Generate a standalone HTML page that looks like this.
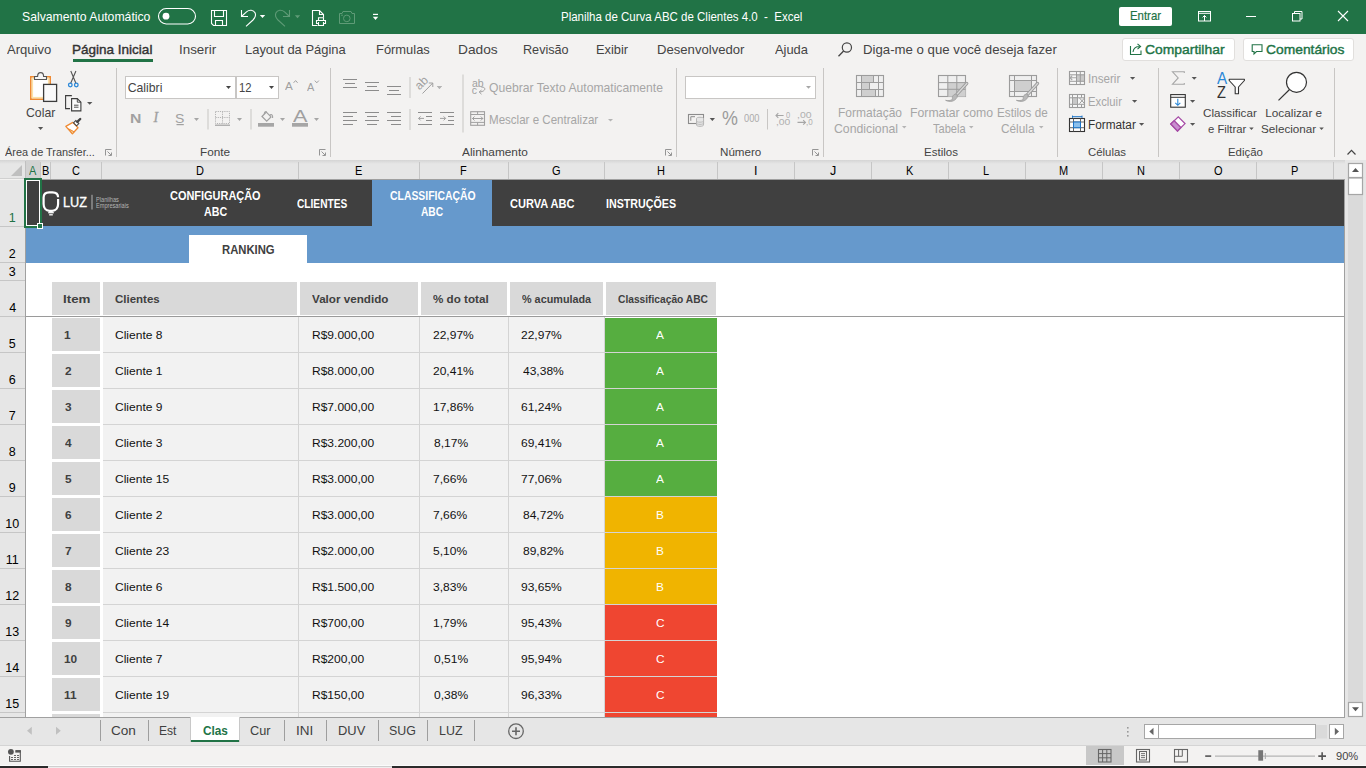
<!DOCTYPE html>
<html><head><meta charset="utf-8">
<style>
*{margin:0;padding:0;box-sizing:border-box}
html,body{width:1366px;height:768px;overflow:hidden;background:#f3f2f1;font-family:"Liberation Sans",sans-serif}
.a{position:absolute}
.t{position:absolute;white-space:nowrap;line-height:1;transform-origin:0 0;font-family:"Liberation Sans",sans-serif}
svg{position:absolute;overflow:visible}
</style></head><body>
<!-- title bar -->
<div class="a" style="left:0;top:0;width:1366px;height:34px;background:#217346"></div>
<!-- menu + ribbon -->
<div class="a" style="left:0;top:34px;width:1366px;height:126px;background:#f3f2f1"></div>
<div class="a" style="left:73px;top:59px;width:80px;height:3px;background:#217346"></div>
<div class="a" style="left:1119px;top:7px;width:53px;height:19px;background:#fff;border-radius:2px"></div>
<div class="a" style="left:1122px;top:38px;width:113px;height:23px;background:#fff;border:1px solid #e1dfdd;border-radius:3px"></div>
<div class="a" style="left:1243px;top:38px;width:111px;height:23px;background:#fff;border:1px solid #e1dfdd;border-radius:3px"></div>
<!-- ribbon separators -->
<div class="a" style="left:116px;top:68px;width:1px;height:89px;background:#c8c6c4"></div>
<div class="a" style="left:330px;top:68px;width:1px;height:89px;background:#c8c6c4"></div>
<div class="a" style="left:676px;top:68px;width:1px;height:89px;background:#c8c6c4"></div>
<div class="a" style="left:823px;top:68px;width:1px;height:89px;background:#c8c6c4"></div>
<div class="a" style="left:1057px;top:68px;width:1px;height:89px;background:#c8c6c4"></div>
<div class="a" style="left:1158px;top:68px;width:1px;height:89px;background:#c8c6c4"></div>
<div class="a" style="left:1334px;top:68px;width:1px;height:89px;background:#c8c6c4"></div>
<!-- font boxes -->
<div class="a" style="left:125px;top:76px;width:111px;height:23px;background:#fff;border:1px solid #c8c6c4"></div>
<div class="a" style="left:236px;top:76px;width:43px;height:23px;background:#fff;border:1px solid #c8c6c4"></div>
<div class="a" style="left:685px;top:76px;width:131px;height:23px;background:#fff;border:1px solid #c8c6c4"></div>
<!-- ribbon bottom shadow -->

<!-- column header bar -->
<div class="a" style="left:0;top:160px;width:1366px;height:19px;background:#e6e6e6"></div>
<div class="a" style="left:0;top:160px;width:1345px;height:4px;background:linear-gradient(#d4d4d4,#e6e6e6)"></div>
<div class="a" style="left:0;top:178px;width:25px;height:1px;background:#d0d0d0"></div>
<div class="a" style="left:25px;top:179px;width:1320px;height:1px;background:#a0a0a0"></div>
<div class="a" style="left:26px;top:160px;width:14px;height:19px;background:#d2d2d2;"></div>
<div class="a" style="left:0px;top:180px;width:25px;height:46px;background:#d2d2d2;"></div>
<div class="a" style="left:40px;top:162px;width:1px;height:17px;background:#c6c6c6;"></div>
<div class="a" style="left:50px;top:162px;width:1px;height:17px;background:#c6c6c6;"></div>
<div class="a" style="left:101px;top:162px;width:1px;height:17px;background:#c6c6c6;"></div>
<div class="a" style="left:298px;top:162px;width:1px;height:17px;background:#c6c6c6;"></div>
<div class="a" style="left:419px;top:162px;width:1px;height:17px;background:#c6c6c6;"></div>
<div class="a" style="left:508px;top:162px;width:1px;height:17px;background:#c6c6c6;"></div>
<div class="a" style="left:604px;top:162px;width:1px;height:17px;background:#c6c6c6;"></div>
<div class="a" style="left:717px;top:162px;width:1px;height:17px;background:#c6c6c6;"></div>
<div class="a" style="left:794px;top:162px;width:1px;height:17px;background:#c6c6c6;"></div>
<div class="a" style="left:871px;top:162px;width:1px;height:17px;background:#c6c6c6;"></div>
<div class="a" style="left:948px;top:162px;width:1px;height:17px;background:#c6c6c6;"></div>
<div class="a" style="left:1025px;top:162px;width:1px;height:17px;background:#c6c6c6;"></div>
<div class="a" style="left:1102px;top:162px;width:1px;height:17px;background:#c6c6c6;"></div>
<div class="a" style="left:1179px;top:162px;width:1px;height:17px;background:#c6c6c6;"></div>
<div class="a" style="left:1256px;top:162px;width:1px;height:17px;background:#c6c6c6;"></div>
<div class="a" style="left:1333px;top:162px;width:1px;height:17px;background:#c6c6c6;"></div>
<svg style="left:0;top:0" width="30" height="180"><polygon points="22,165 22,176 11,176" fill="#bfbfbf"/></svg>
<!-- row headers -->
<div class="a" style="left:0;top:180px;width:25px;height:537px;background:#e6e6e6"></div>
<div class="a" style="left:25px;top:161px;width:1px;height:18px;background:#c0c0c0"></div>
<div class="a" style="left:25px;top:179px;width:1px;height:538px;background:#a0a0a0"></div>
<div class="a" style="left:0px;top:226px;width:25px;height:1px;background:#c6c6c6;"></div>
<div class="a" style="left:0px;top:262px;width:25px;height:1px;background:#c6c6c6;"></div>
<div class="a" style="left:0px;top:280px;width:25px;height:1px;background:#c6c6c6;"></div>
<div class="a" style="left:0px;top:316px;width:25px;height:1px;background:#c6c6c6;"></div>
<div class="a" style="left:0px;top:352px;width:25px;height:1px;background:#c6c6c6;"></div>
<div class="a" style="left:0px;top:388px;width:25px;height:1px;background:#c6c6c6;"></div>
<div class="a" style="left:0px;top:424px;width:25px;height:1px;background:#c6c6c6;"></div>
<div class="a" style="left:0px;top:460px;width:25px;height:1px;background:#c6c6c6;"></div>
<div class="a" style="left:0px;top:496px;width:25px;height:1px;background:#c6c6c6;"></div>
<div class="a" style="left:0px;top:532px;width:25px;height:1px;background:#c6c6c6;"></div>
<div class="a" style="left:0px;top:568px;width:25px;height:1px;background:#c6c6c6;"></div>
<div class="a" style="left:0px;top:604px;width:25px;height:1px;background:#c6c6c6;"></div>
<div class="a" style="left:0px;top:640px;width:25px;height:1px;background:#c6c6c6;"></div>
<div class="a" style="left:0px;top:676px;width:25px;height:1px;background:#c6c6c6;"></div>
<div class="a" style="left:0px;top:712px;width:25px;height:1px;background:#c6c6c6;"></div>
<!-- grid -->
<div class="a" style="left:26px;top:180px;width:1318px;height:537px;background:#fff"></div>
<div class="a" style="left:26px;top:180px;width:1318px;height:46px;background:#404040;"></div>
<div class="a" style="left:372px;top:180px;width:120px;height:46px;background:#6699cc;"></div>
<div class="a" style="left:26px;top:226px;width:1318px;height:37px;background:#6699cc;"></div>
<div class="a" style="left:189px;top:235px;width:118px;height:28px;background:#ffffff;"></div>
<div class="a" style="left:52px;top:282px;width:48px;height:33px;background:#d9d9d9;"></div>
<div class="a" style="left:103px;top:282px;width:194px;height:33px;background:#d9d9d9;"></div>
<div class="a" style="left:300px;top:282px;width:118px;height:33px;background:#d9d9d9;"></div>
<div class="a" style="left:421px;top:282px;width:86px;height:33px;background:#d9d9d9;"></div>
<div class="a" style="left:510px;top:282px;width:93px;height:33px;background:#d9d9d9;"></div>
<div class="a" style="left:606px;top:282px;width:110px;height:33px;background:#d9d9d9;"></div>
<div class="a" style="left:26px;top:316px;width:1318px;height:1px;background:#9a9a9a;"></div>
<div class="a" style="left:103px;top:317px;width:501px;height:400px;background:#f2f2f2;"></div>
<div class="a" style="left:298px;top:317px;width:1px;height:400px;background:#d4d4d4;"></div>
<div class="a" style="left:419px;top:317px;width:1px;height:400px;background:#d4d4d4;"></div>
<div class="a" style="left:508px;top:317px;width:1px;height:400px;background:#d4d4d4;"></div>
<div class="a" style="left:604px;top:317px;width:1px;height:400px;background:#d4d4d4;"></div>
<div class="a" style="left:605px;top:317px;width:112px;height:36px;background:#56ae40;"></div>
<div class="a" style="left:52px;top:318px;width:48px;height:33px;background:#d9d9d9;"></div>
<div class="a" style="left:605px;top:353px;width:112px;height:36px;background:#56ae40;"></div>
<div class="a" style="left:52px;top:354px;width:48px;height:33px;background:#d9d9d9;"></div>
<div class="a" style="left:605px;top:389px;width:112px;height:36px;background:#56ae40;"></div>
<div class="a" style="left:52px;top:390px;width:48px;height:33px;background:#d9d9d9;"></div>
<div class="a" style="left:605px;top:425px;width:112px;height:36px;background:#56ae40;"></div>
<div class="a" style="left:52px;top:426px;width:48px;height:33px;background:#d9d9d9;"></div>
<div class="a" style="left:605px;top:461px;width:112px;height:36px;background:#56ae40;"></div>
<div class="a" style="left:52px;top:462px;width:48px;height:33px;background:#d9d9d9;"></div>
<div class="a" style="left:605px;top:497px;width:112px;height:36px;background:#f0b400;"></div>
<div class="a" style="left:52px;top:498px;width:48px;height:33px;background:#d9d9d9;"></div>
<div class="a" style="left:605px;top:533px;width:112px;height:36px;background:#f0b400;"></div>
<div class="a" style="left:52px;top:534px;width:48px;height:33px;background:#d9d9d9;"></div>
<div class="a" style="left:605px;top:569px;width:112px;height:36px;background:#f0b400;"></div>
<div class="a" style="left:52px;top:570px;width:48px;height:33px;background:#d9d9d9;"></div>
<div class="a" style="left:605px;top:605px;width:112px;height:36px;background:#ef4631;"></div>
<div class="a" style="left:52px;top:606px;width:48px;height:33px;background:#d9d9d9;"></div>
<div class="a" style="left:605px;top:641px;width:112px;height:36px;background:#ef4631;"></div>
<div class="a" style="left:52px;top:642px;width:48px;height:33px;background:#d9d9d9;"></div>
<div class="a" style="left:605px;top:677px;width:112px;height:36px;background:#ef4631;"></div>
<div class="a" style="left:52px;top:678px;width:48px;height:33px;background:#d9d9d9;"></div>
<div class="a" style="left:605px;top:713px;width:112px;height:36px;background:#ef4631;"></div>
<div class="a" style="left:52px;top:714px;width:48px;height:33px;background:#d9d9d9;"></div>
<div class="a" style="left:103px;top:352px;width:614px;height:1px;background:#d4d4d4;"></div>
<div class="a" style="left:103px;top:388px;width:614px;height:1px;background:#d4d4d4;"></div>
<div class="a" style="left:103px;top:424px;width:614px;height:1px;background:#d4d4d4;"></div>
<div class="a" style="left:103px;top:460px;width:614px;height:1px;background:#d4d4d4;"></div>
<div class="a" style="left:103px;top:496px;width:614px;height:1px;background:#d4d4d4;"></div>
<div class="a" style="left:103px;top:532px;width:614px;height:1px;background:#d4d4d4;"></div>
<div class="a" style="left:103px;top:568px;width:614px;height:1px;background:#d4d4d4;"></div>
<div class="a" style="left:103px;top:604px;width:614px;height:1px;background:#d4d4d4;"></div>
<div class="a" style="left:103px;top:640px;width:614px;height:1px;background:#d4d4d4;"></div>
<div class="a" style="left:103px;top:676px;width:614px;height:1px;background:#d4d4d4;"></div>
<div class="a" style="left:103px;top:712px;width:614px;height:1px;background:#d4d4d4;"></div>
<div class="a" style="left:103px;top:748px;width:614px;height:1px;background:#d4d4d4;"></div>
<div class="a" style="left:605px;top:317px;width:112px;height:1px;background:#ffffff;"></div>
<div class="a" style="left:24px;top:178px;width:18px;height:50px;background:transparent;border:2px solid #217346"></div>
<div class="a" style="left:26px;top:180px;width:14px;height:46px;background:transparent;border:1px solid #ffffff"></div>
<div class="a" style="left:37px;top:223px;width:6px;height:6px;background:#217346;border:1px solid #fff"></div>
<svg style="left:0;top:0" width="1366" height="768"><path d="M58.1,197.2 C58.1,194 56,192.3 52.5,192.3 H49.2 C45.7,192.3 43.6,194 43.6,197.5 V204 C43.6,208 45.8,210.8 49.5,210.8 H52.2 C55.9,210.8 58.1,208 58.1,204 V199" fill="none" stroke="#fff" stroke-width="2.2"/><path d="M48.2,212.7 H53.8" stroke="#fff" stroke-width="1.3"/><path d="M49.2,214.8 H52.8" stroke="#fff" stroke-width="1.3"/><rect x="91.2" y="194.8" width="1.6" height="14.7" fill="#8a8a8a"/></svg>
<!-- vertical scrollbar -->
<div class="a" style="left:1344px;top:179px;width:1px;height:539px;background:#a0a0a0"></div>
<div class="a" style="left:1345px;top:160px;width:21px;height:558px;background:#e6e6e6"></div>
<div class="a" style="left:1348px;top:163px;width:15px;height:552px;background:#dadada"></div>
<!-- sheet tab bar -->
<div class="a" style="left:0;top:717px;width:1366px;height:28px;background:#e6e6e6"></div>
<div class="a" style="left:0;top:717px;width:1345px;height:1px;background:#a0a0a0"></div>
<div class="a" style="left:100px;top:720px;width:1px;height:21px;background:#9e9e9e;"></div>
<div class="a" style="left:148px;top:720px;width:1px;height:21px;background:#9e9e9e;"></div>
<div class="a" style="left:284px;top:720px;width:1px;height:21px;background:#9e9e9e;"></div>
<div class="a" style="left:326px;top:720px;width:1px;height:21px;background:#9e9e9e;"></div>
<div class="a" style="left:378px;top:720px;width:1px;height:21px;background:#9e9e9e;"></div>
<div class="a" style="left:427px;top:720px;width:1px;height:21px;background:#9e9e9e;"></div>
<div class="a" style="left:474px;top:720px;width:1px;height:21px;background:#9e9e9e;"></div>
<div class="a" style="left:190px;top:717px;width:50px;height:25px;background:#ffffff;border-left:1px solid #c8c8c8;border-right:1px solid #c8c8c8;"></div>
<div class="a" style="left:191px;top:740px;width:48px;height:2px;background:#217346;"></div>
<!-- status bar -->
<div class="a" style="left:0;top:745px;width:1366px;height:1px;background:#d4d4d4"></div>
<div class="a" style="left:0;top:746px;width:1366px;height:20px;background:#f3f2f1"></div>
<div class="a" style="left:1086px;top:746px;width:38px;height:20px;background:#c8c8c8"></div>
<div class="a" style="left:0;top:765px;width:1366px;height:1px;background:#fbfbfb"></div>
<div class="a" style="left:0;top:766px;width:1366px;height:2px;background:#2b2b2b"></div>
<div class="a" style="left:48px;top:766px;width:344px;height:1px;background:#cfcfcf"></div>
<div class="a" style="left:48px;top:767px;width:344px;height:1px;background:#eeeeee"></div>
<svg style="left:0;top:0" width="1366" height="768"><polygon points="31.8,726.8 31.8,734.8 27,730.8" fill="#c0c0c0"/><polygon points="56,726.8 56,734.8 60.8,730.8" fill="#c0c0c0"/><circle cx="516" cy="731.2" r="7.3" fill="none" stroke="#666" stroke-width="1.3"/><path d="M512,731.2 H520 M516,727.2 V735.2" stroke="#666" stroke-width="1.6"/><rect x="1127" y="727" width="1.6" height="1.6" fill="#9a9a9a"/><rect x="1127" y="731" width="1.6" height="1.6" fill="#9a9a9a"/><rect x="1127" y="735" width="1.6" height="1.6" fill="#9a9a9a"/><rect x="1144.5" y="724.5" width="14" height="14" fill="#fff" stroke="#a6a6a6" stroke-width="1"/><polygon points="1153.5,727.8 1153.5,735.2 1149.3,731.5" fill="#666"/><rect x="1158.5" y="724.5" width="157" height="14" fill="#fff" stroke="#a6a6a6" stroke-width="1"/><rect x="1316" y="725" width="11" height="13.5" fill="#dadada"/><rect x="1329.5" y="724.5" width="14" height="14" fill="#fff" stroke="#a6a6a6" stroke-width="1"/><polygon points="1334.8,727.8 1334.8,735.2 1339,731.5" fill="#666"/><rect x="1348.5" y="163.5" width="14" height="14" fill="#fff" stroke="#a6a6a6" stroke-width="1.2"/><polygon points="1352,172 1359,172 1355.5,168" fill="#555"/><rect x="1348.5" y="178" width="14" height="16.5" fill="#fff" stroke="#a6a6a6" stroke-width="1.2"/><rect x="1348.5" y="702.5" width="14" height="14" fill="#fff" stroke="#a6a6a6" stroke-width="1.2"/><polygon points="1352,707.3 1359,707.3 1355.5,711.3" fill="#555"/><circle cx="10.9" cy="751.8" r="2.9" fill="#555"/><path d="M9.6,756 V761.2 H20.3 V750.7 H15.8" fill="none" stroke="#555" stroke-width="1.1"/><rect x="15.3" y="750.2" width="5.5" height="2.4" fill="#555"/><rect x="14.1" y="755.0" width="1.8" height="1" fill="#555"/><rect x="17.1" y="755.0" width="1.8" height="1" fill="#555"/><rect x="11.1" y="757.0" width="1.8" height="1" fill="#555"/><rect x="14.1" y="757.0" width="1.8" height="1" fill="#555"/><rect x="17.1" y="757.0" width="1.8" height="1" fill="#555"/><rect x="11.1" y="759.0" width="1.8" height="1" fill="#555"/><rect x="14.1" y="759.0" width="1.8" height="1" fill="#555"/><rect x="17.1" y="759.0" width="1.8" height="1" fill="#555"/><rect x="1098.5" y="749.5" width="12.5" height="12.5" fill="none" stroke="#666" stroke-width="1.1"/><path d="M1102.6,749.5 V762 M1106.8,749.5 V762 M1098.5,753.6 H1111 M1098.5,757.8 H1111" stroke="#666" stroke-width="1"/><rect x="1136.5" y="749.5" width="13" height="12.5" fill="none" stroke="#666" stroke-width="1.1"/><rect x="1139.5" y="751.5" width="7" height="8.5" fill="none" stroke="#666" stroke-width="1"/><path d="M1141,753.6 H1145 M1141,755.6 H1145 M1141,757.6 H1145" stroke="#666" stroke-width="0.9"/><rect x="1174.5" y="749.5" width="13" height="12.5" fill="none" stroke="#666" stroke-width="1.1"/><path d="M1174.5,756.3 H1182.3 V749.5 M1178.6,749.5 V756.3" fill="none" stroke="#666" stroke-width="1"/><rect x="1205.2" y="755.3" width="6" height="1.6" fill="#555"/><rect x="1215" y="755.6" width="100" height="1" fill="#a6a6a6"/><rect x="1264.8" y="753" width="1" height="6" fill="#a6a6a6"/><rect x="1258.3" y="750.2" width="4.8" height="10.5" fill="#777"/><path d="M1318.3,756.1 H1326 M1322.15,752.3 V760" stroke="#555" stroke-width="1.6"/></svg>
<svg style="left:0;top:0" width="1366" height="768" viewBox="0 0 1366 768"><rect x="158.5" y="8.5" width="37" height="15.5" rx="7.75" fill="none" stroke="#fff" stroke-width="1.1"/><circle cx="166" cy="16.2" r="3.4" fill="#fff"/><path d="M211.5,10.5 H226.5 V25.5 H213.5 L211.5,23.5 Z" fill="none" stroke="#fff" stroke-width="1.1"/><path d="M214.5,10.5 V16.5 H223.5 V10.5" fill="none" stroke="#fff" stroke-width="1.1"/><path d="M215.5,25.5 V20.5 H222.5 V25.5" fill="none" stroke="#fff" stroke-width="1.1"/><path d="M241.5,10 V16.5 H248" fill="none" stroke="#fff" stroke-width="1.1"/><path d="M242,16 L246.5,11.8 C249.5,9.3 253.5,9.8 255,12.8 C256.3,15.5 255,18 253,20 L246,26.3" fill="none" stroke="#fff" stroke-width="1.1"/><polygon points="259.8,15 265.2,15 262.5,18" fill="#fff"/><path d="M289.5,10 V16.5 H283" fill="none" stroke="#5f9b77" stroke-width="1.1"/><path d="M289,16 L284.5,11.8 C281.5,9.3 277.5,9.8 276,12.8 C274.7,15.5 276,18 278,20 L285,26.3" fill="none" stroke="#5f9b77" stroke-width="1.1"/><polygon points="294.8,15.3 300.2,15.3 297.5,18.2" fill="#5f9b77"/><path d="M317.5,25.5 H312.5 V10.5 H319.5 L323.5,14.5 V17.5" fill="none" stroke="#fff" stroke-width="1.1"/><path d="M319.5,10.5 V14.5 H323.5" fill="none" stroke="#fff" stroke-width="1.1"/><path d="M318.5,20.5 V17.8 H323.5 V20.5 M318.5,23.5 H316.5 V20.5 H325.5 V23.5 H323.5 M318.5,22 V25.5 H323.5 V22" fill="none" stroke="#fff" stroke-width="1.1"/><path d="M339.5,13.5 H342 L343,11.5 H351 L352,13.5 H354.5 V23.5 H339.5 Z" fill="none" stroke="#5f9b77" stroke-width="1"/><circle cx="346.8" cy="18.4" r="3.3" fill="none" stroke="#5f9b77" stroke-width="1"/><circle cx="342" cy="15.2" r="0.8" fill="#5f9b77"/><rect x="373" y="13.8" width="5" height="1.2" fill="#fff"/><polygon points="372.8,16.8 378.2,16.8 375.5,20" fill="#fff"/><rect x="1198.5" y="11.5" width="12" height="9.5" fill="none" stroke="#fff" stroke-width="1"/><path d="M1198.5,13.3 H1210.5 M1204.5,21 V15.5 M1202.6,17.4 L1204.5,15.5 L1206.4,17.4" fill="none" stroke="#fff" stroke-width="1"/><rect x="1246" y="16" width="10" height="1" fill="#fff"/><rect x="1292.5" y="13.5" width="7.5" height="7.5" fill="none" stroke="#fff" stroke-width="1"/><path d="M1294.5,13.5 V11.5 H1302 V19 H1300" fill="none" stroke="#fff" stroke-width="1"/><path d="M1338,11 L1348,21 M1348,11 L1338,21" stroke="#fff" stroke-width="1.1"/><circle cx="846.9" cy="47.5" r="4.6" fill="none" stroke="#444" stroke-width="1.2"/><path d="M843.6,51 L838.5,56.3" stroke="#444" stroke-width="1.3"/><path d="M1130.5,46 V54.5 H1141 V50.5" fill="none" stroke="#217346" stroke-width="1.1"/><path d="M1133,52 C1133.5,48.5 1135.5,46.5 1139.5,46.5 M1137.5,43.8 L1140.6,46.5 L1137.5,49.2" fill="none" stroke="#217346" stroke-width="1.1"/><path d="M1252.2,44.7 H1262 V51.5 H1256.5 L1254,54 V51.5 H1252.2 Z" fill="none" stroke="#217346" stroke-width="1.1"/></svg>
<svg style="left:0;top:0" width="1366" height="768" viewBox="0 0 1366 768"><rect x="30.8" y="76.8" width="19.4" height="22.4" fill="#fdfdfd" stroke="#ef8a32" stroke-width="1.6"/><rect x="32.4" y="78.4" width="16.2" height="19.2" fill="#fff" stroke="#fbe2a8" stroke-width="1.4"/><path d="M34.5,79.5 V76.5 H37.6 C37.6,73.6 38.9,72.6 40.6,72.6 C42.3,72.6 43.6,73.6 43.6,76.5 H46.5 V79.5 Z" fill="#f5f5f5" stroke="#555" stroke-width="1.1"/><rect x="43.6" y="84.4" width="13" height="17" fill="#fafafa" stroke="#3c3c3c" stroke-width="1.3"/><polygon points="38,127 43.2,127 40.6,130" fill="#555"/><path d="M70.8,71 L76,83.5 M75.9,71 L70.6,83.5" stroke="#555" stroke-width="1.1" fill="none"/><circle cx="70.3" cy="85" r="1.8" fill="none" stroke="#2b88d8" stroke-width="1.3"/><circle cx="76.3" cy="85" r="1.8" fill="none" stroke="#2b88d8" stroke-width="1.3"/><path d="M71.8,96.2 L71.2,95.6 H65.6 V108.6 H70" fill="none" stroke="#3c3c3c" stroke-width="1.1"/><path d="M71.6,98.6 H77.3 L80.9,102.2 V110.9 H71.6 Z" fill="#fafafa" stroke="#3c3c3c" stroke-width="1.1"/><path d="M77.3,98.6 V102.2 H80.9 M74,105.2 H78.5 M74,107.2 H78.5" fill="none" stroke="#3c3c3c" stroke-width="0.9"/><polygon points="87,102 92.4,102 89.7,104.8" fill="#555"/><path d="M65.8,126.4 L72.8,122.4 L78,127.8 L72.4,133.8 Z" fill="#fff" stroke="#ef8a32" stroke-width="1.3" stroke-linejoin="round"/><path d="M68.5,128.8 L74.2,131.8 L72.4,133.8 Z" fill="#f5c98a" stroke="#ef8a32" stroke-width="1"/><path d="M73.5,122.8 L75.8,120.6 L78.8,123.6 L76.6,125.8 Z" fill="#fff" stroke="#444" stroke-width="1.1"/><path d="M77.3,121.9 L80.2,119" stroke="#444" stroke-width="2.4" stroke-linecap="round"/><path d="M105.5,155.5 V149.5 H111.5" fill="none" stroke="#8a8a8a" stroke-width="0.9"/><path d="M107.5,151.5 L111,155 M108.5,155.5 H111.5 V152.5" fill="none" stroke="#8a8a8a" stroke-width="0.9"/><path d="M319.5,155.5 V149.5 H325.5" fill="none" stroke="#8a8a8a" stroke-width="0.9"/><path d="M321.5,151.5 L325,155 M322.5,155.5 H325.5 V152.5" fill="none" stroke="#8a8a8a" stroke-width="0.9"/><path d="M665.5,155.5 V149.5 H671.5" fill="none" stroke="#8a8a8a" stroke-width="0.9"/><path d="M667.5,151.5 L671,155 M668.5,155.5 H671.5 V152.5" fill="none" stroke="#8a8a8a" stroke-width="0.9"/><path d="M812.5,155.5 V149.5 H818.5" fill="none" stroke="#8a8a8a" stroke-width="0.9"/><path d="M814.5,151.5 L818,155 M815.5,155.5 H818.5 V152.5" fill="none" stroke="#8a8a8a" stroke-width="0.9"/><polygon points="226,86 231,86 228.5,89" fill="#444"/><polygon points="269,86 274,86 271.5,89" fill="#444"/><path d="M293.6,82.8 L295.6,80.6 L297.6,82.8 M314.8,80.6 L316.8,82.8 L318.8,80.6" fill="none" stroke="#a0a0a0" stroke-width="1"/><path d="M176.5,124.6 H183.8" stroke="#a0a0a0" stroke-width="1.2"/><polygon points="194,118 199,118 196.5,121" fill="#a6a6a6"/><polygon points="237,118 242,118 239.5,121" fill="#a6a6a6"/><polygon points="280,118 285,118 282.5,121" fill="#a6a6a6"/><polygon points="314,118 319,118 316.5,121" fill="#a6a6a6"/><rect x="207.5" y="109" width="1" height="20.5" fill="#c8c6c4"/><rect x="250.5" y="109" width="1" height="20.5" fill="#c8c6c4"/><rect x="215.5" y="111.5" width="14" height="12" fill="none" stroke="#b4b4b4" stroke-width="1" stroke-dasharray="1.2,1"/><path d="M222.5,111.5 V123.5 M215.5,117.5 H229.5" fill="none" stroke="#b4b4b4" stroke-width="1" stroke-dasharray="1.2,1"/><rect x="215" y="124.6" width="15" height="1.2" fill="#a0a0a0"/><path d="M262,116.5 L266.3,112.2 L271,116.9 L266.7,121.2 Z" fill="none" stroke="#a0a0a0" stroke-width="1.2"/><path d="M264.2,114.3 C264.5,112 265.5,111.2 266.5,111.6 M269.5,115.5 C271.5,113.5 273,115 272.6,118" fill="none" stroke="#a0a0a0" stroke-width="1.1"/><rect x="258" y="123" width="16" height="3.7" fill="#a6a6a6"/><rect x="292" y="123" width="16" height="3.7" fill="#a6a6a6"/><rect x="343" y="79.0" width="14" height="1" fill="#8c8c8c"/><rect x="345" y="83.0" width="10" height="1" fill="#8c8c8c"/><rect x="343" y="87.0" width="14" height="1" fill="#8c8c8c"/><rect x="365" y="82.0" width="14" height="1" fill="#8c8c8c"/><rect x="367" y="86.0" width="10" height="1" fill="#8c8c8c"/><rect x="365" y="90.0" width="14" height="1" fill="#8c8c8c"/><rect x="387" y="86.0" width="14" height="1" fill="#8c8c8c"/><rect x="389" y="90.0" width="10" height="1" fill="#8c8c8c"/><rect x="387" y="94.0" width="14" height="1" fill="#8c8c8c"/><rect x="343" y="112.0" width="14" height="1" fill="#8c8c8c"/><rect x="343" y="116.0" width="10" height="1" fill="#8c8c8c"/><rect x="343" y="120.0" width="14" height="1" fill="#8c8c8c"/><rect x="343" y="124.0" width="10" height="1" fill="#8c8c8c"/><rect x="365" y="112.0" width="14" height="1" fill="#8c8c8c"/><rect x="367" y="116.0" width="10" height="1" fill="#8c8c8c"/><rect x="365" y="120.0" width="14" height="1" fill="#8c8c8c"/><rect x="367" y="124.0" width="10" height="1" fill="#8c8c8c"/><rect x="387" y="112.0" width="14" height="1" fill="#8c8c8c"/><rect x="391" y="116.0" width="10" height="1" fill="#8c8c8c"/><rect x="387" y="120.0" width="14" height="1" fill="#8c8c8c"/><rect x="391" y="124.0" width="10" height="1" fill="#8c8c8c"/><rect x="418" y="112.0" width="14" height="1" fill="#8c8c8c"/><rect x="426" y="116.0" width="6" height="1" fill="#8c8c8c"/><rect x="426" y="120.0" width="6" height="1" fill="#8c8c8c"/><rect x="418" y="124.0" width="14" height="1" fill="#8c8c8c"/><rect x="440" y="112.0" width="14" height="1" fill="#8c8c8c"/><rect x="448" y="116.0" width="6" height="1" fill="#8c8c8c"/><rect x="448" y="120.0" width="6" height="1" fill="#8c8c8c"/><rect x="440" y="124.0" width="14" height="1" fill="#8c8c8c"/><path d="M424,118.4 H418.6 M420.6,116.4 L418.6,118.4 L420.6,120.4" fill="none" stroke="#a0a0a0" stroke-width="1"/><path d="M440,118.4 H445.6 M443.6,116.4 L445.6,118.4 L443.6,120.4" fill="none" stroke="#a0a0a0" stroke-width="1"/><rect x="409.5" y="77" width="1" height="21" fill="#c8c6c4"/><rect x="409.5" y="109" width="1" height="21" fill="#c8c6c4"/><rect x="462.5" y="74.5" width="1" height="58" fill="#c8c6c4"/><text x="0" y="0" transform="translate(419.5,90.5) rotate(-45)" font-family="Liberation Sans" font-size="12" fill="#a0a0a0">ab</text><path d="M422.5,93.5 L432.8,83 M428.8,83 H432.8 V87" fill="none" stroke="#a0a0a0" stroke-width="1"/><polygon points="437,86 442,86 439.5,89" fill="#b0b0b0"/><text x="472" y="86.6" font-family="Liberation Sans" font-size="10.5" fill="#a0a0a0">ab</text><text x="471.8" y="93.8" font-family="Liberation Sans" font-size="10.5" fill="#a0a0a0">c</text><path d="M481.5,87.3 C486,86.5 486.5,91.5 479.5,92 M481.5,90 L479.2,92 L481.5,94.2" fill="none" stroke="#a0a0a0" stroke-width="1"/><rect x="470.7" y="111.7" width="13.8" height="13.6" fill="none" stroke="#a0a0a0" stroke-width="1.1"/><path d="M470.7,114.5 H484.5 M470.7,122.4 H484.5 M477.6,111.7 V114.5 M477.6,122.4 V125.3" fill="none" stroke="#a0a0a0" stroke-width="1"/><path d="M472.3,118.5 H483 M474.5,116.5 L472.5,118.5 L474.5,120.5 M480.8,116.5 L482.8,118.5 L480.8,120.5" fill="none" stroke="#a0a0a0" stroke-width="1"/><polygon points="608,119 613,119 610.5,121.5" fill="#b4b4b4"/><polygon points="436.8,86 442,86 439.4,89" fill="#b4b4b4"/><polygon points="806,86 811,86 808.5,88.7" fill="#a6a6a6"/><rect x="688.5" y="114.5" width="15" height="9" fill="none" stroke="#8c8c8c" stroke-width="1.1"/><path d="M690.8,120.8 V116.7 H695 M698,118 H702" fill="none" stroke="#8c8c8c" stroke-width="1"/><path d="M696.5,118.5 V125 C696.5,126.8 703.5,126.8 703.5,125 V118.5 C703.5,116.8 696.5,116.8 696.5,118.5 Z" fill="#e6e6e6" stroke="#b8b8b8" stroke-width="1"/><path d="M696.5,121 C696.5,122.6 703.5,122.6 703.5,121 M696.5,123.2 C696.5,124.8 703.5,124.8 703.5,123.2" fill="none" stroke="#b8b8b8" stroke-width="0.9"/><polygon points="709.7,118 715,118 712.35,121" fill="#555"/><rect x="767" y="109" width="1" height="20.5" fill="#c8c6c4"/><path d="M783.6,115.5 H776 M778.3,113.2 L776,115.5 L778.3,117.8" fill="none" stroke="#a6a6a6" stroke-width="1.1"/><path d="M797.5,122.4 H805.5 M803.2,120.1 L805.5,122.4 L803.2,124.7" fill="none" stroke="#a6a6a6" stroke-width="1.1"/><rect x="856.5" y="75.5" width="27" height="21" fill="#efefef" stroke="#9c9c9c" stroke-width="1.1"/><rect x="861.5" y="75.5" width="12" height="7" fill="#cfcfcf" stroke="#9c9c9c" stroke-width="1"/><rect x="861.5" y="82.5" width="8" height="7" fill="#cfcfcf" stroke="#9c9c9c" stroke-width="1"/><rect x="861.5" y="89.5" width="14" height="7" fill="#cfcfcf" stroke="#9c9c9c" stroke-width="1"/><path d="M878.5,75.5 V96.5 M856.5,82.5 H883.5 M856.5,89.5 H883.5" fill="none" stroke="#9c9c9c" stroke-width="1"/><rect x="938.5" y="75.5" width="27" height="21" fill="#efefef" stroke="#9c9c9c" stroke-width="1.1"/><rect x="947.8" y="82.6" width="17.8" height="14" fill="#cfcfcf"/><path d="M947.8,75.5 V96.5 M956.8,75.5 V96.5 M938.5,82.6 H965.5 M938.5,89.3 H965.5" fill="none" stroke="#9c9c9c" stroke-width="1"/><path d="M966.8,83.4 L955.6,95.8" stroke="#9c9c9c" stroke-width="3.2" stroke-linecap="round"/><path d="M966.8,83.4 L955.6,95.8" stroke="#d8d8d8" stroke-width="1.4" stroke-linecap="round"/><path d="M957.1,94.3 C953.6,93.3 951.6,96.8 952.6,99.3 C950.6,100.8 947.6,100.8 945.6,100.3 C949.6,102.3 954.6,101.8 957.1,97.3 Z" fill="#b8b8b8" stroke="#9c9c9c" stroke-width="0.8"/><rect x="1009.5" y="75.5" width="27" height="21" fill="#efefef" stroke="#9c9c9c" stroke-width="1.1"/><rect x="1014.5" y="80.5" width="17" height="11" fill="#cfcfcf" stroke="#9c9c9c" stroke-width="1"/><path d="M1014.5,75.5 V96.5 M1031.5,75.5 V96.5 M1009.5,80.5 H1036.5 M1009.5,91.5 H1036.5" fill="none" stroke="#9c9c9c" stroke-width="1"/><path d="M1037.6,83.4 L1026.4,95.8" stroke="#9c9c9c" stroke-width="3.2" stroke-linecap="round"/><path d="M1037.6,83.4 L1026.4,95.8" stroke="#d8d8d8" stroke-width="1.4" stroke-linecap="round"/><path d="M1027.9,94.3 C1024.4,93.3 1022.4000000000001,96.8 1023.4000000000001,99.3 C1021.4000000000001,100.8 1018.4000000000001,100.8 1016.4000000000001,100.3 C1020.4000000000001,102.3 1025.4,101.8 1027.9,97.3 Z" fill="#b8b8b8" stroke="#9c9c9c" stroke-width="0.8"/><polygon points="902,126 906.5,126 904.25,128.5" fill="#b4b4b4"/><polygon points="969,126 973.5,126 971.25,128.5" fill="#b4b4b4"/><polygon points="1039,126 1043.5,126 1041.25,128.5" fill="#b4b4b4"/><rect x="1069.5" y="71.5" width="15" height="13" fill="#f7f7f7" stroke="#9c9c9c" stroke-width="1.1"/><rect x="1076" y="74.6" width="8" height="6.7" fill="#c8c8c8"/><path d="M1076.5,71.5 V84.5 M1080.3,71.5 V84.5 M1069.5,74.8 H1084.5 M1069.5,81.3 H1084.5" fill="none" stroke="#9c9c9c" stroke-width="1"/><path d="M1076,77.8 H1070 M1072.2,75.6 L1070,77.8 L1072.2,80" fill="none" stroke="#a6a6a6" stroke-width="1.1"/><rect x="1069.5" y="94.5" width="15" height="13" fill="#f7f7f7" stroke="#9c9c9c" stroke-width="1.1"/><path d="M1072.5,94.5 V107.5 M1077.5,94.5 V107.5 M1081.5,94.5 V97.5 M1081.5,104.5 V107.5 M1069.5,97.8 H1084.5 M1069.5,104.3 H1084.5" fill="none" stroke="#9c9c9c" stroke-width="1"/><rect x="1072.5" y="97.8" width="5" height="6.5" fill="#c8c8c8" stroke="#9c9c9c" stroke-width="0.8"/><path d="M1079.5,98 L1084.5,103.6 M1084.5,98 L1079.5,103.6" stroke="#9c9c9c" stroke-width="1"/><rect x="1069.5" y="118.5" width="15" height="13" fill="#fff" stroke="#333" stroke-width="1.1"/><path d="M1073.5,118.5 V131.5 M1080.5,118.5 V131.5 M1069.5,122 H1084.5 M1069.5,127.7 H1084.5" fill="none" stroke="#555" stroke-width="0.9"/><rect x="1073.5" y="122" width="7" height="5.7" fill="#8cc0ec" stroke="#1a73c8" stroke-width="1"/><path d="M1072.5,116.7 H1082 M1072.5,115.6 V117.8 M1082,115.6 V117.8" fill="none" stroke="#1a73c8" stroke-width="1"/><polygon points="1130,77 1135.2,77 1132.6,79.8" fill="#555"/><polygon points="1132,100 1137.2,100 1134.6,102.8" fill="#555"/><polygon points="1139,123 1144.2,123 1141.6,125.8" fill="#555"/><path d="M1184.3,73 V71.8 H1172.5 L1178.2,77.9 L1172.5,84.2 H1184.3 V83" fill="none" stroke="#a6a6a6" stroke-width="1.1"/><rect x="1170.7" y="94.6" width="14.6" height="12.6" fill="#fff" stroke="#333" stroke-width="1.1"/><path d="M1170.7,97.3 H1185.3" stroke="#333" stroke-width="1"/><path d="M1177.8,98.8 V105.2 M1175.3,102.8 L1177.8,105.3 L1180.3,102.8" fill="none" stroke="#2b88d8" stroke-width="1.1"/><path d="M1170.8,124 L1178.3,116.8 L1185,123.6 L1177.5,131 Z" fill="#fff" stroke="#a64ca6" stroke-width="1.3"/><path d="M1170.8,124 L1174.2,120.7 L1180.9,127.5 L1177.5,131 Z" fill="#c98fd0" stroke="#a64ca6" stroke-width="1.3"/><polygon points="1191.6,77 1196.8,77 1194.1999999999998,79.8" fill="#555"/><polygon points="1190,100 1195.2,100 1192.6,102.8" fill="#555"/><polygon points="1190,123 1195.2,123 1192.6,125.8" fill="#555"/><path d="M1229.2,79.2 H1244.4 V80.5 L1238.5,87 V93.8 H1235.2 V87 L1229.2,80.5 Z" fill="#fff" stroke="#333" stroke-width="1.1" stroke-linejoin="round"/><circle cx="1296.5" cy="82.3" r="10" fill="#fff" stroke="#333" stroke-width="1.2"/><path d="M1289.3,89.7 L1278.5,100.4" stroke="#333" stroke-width="1.2"/><polygon points="1249.2,127.6 1253.7,127.6 1251.45,129.9" fill="#555"/><polygon points="1319.3,127.6 1323.8,127.6 1321.55,129.9" fill="#555"/><path d="M1347.5,154.5 L1351.5,150.3 L1355.5,154.5" fill="none" stroke="#444" stroke-width="1.2"/></svg>
<span class="t" style="left:22.04px;top:11.36px;font-size:12.75px;color:#fff;font-weight:normal;transform:scaleX(0.9586);">Salvamento Automático</span>
<span class="t" style="left:561.12px;top:10.12px;font-size:13.0px;color:#fff;font-weight:normal;transform:scaleX(0.8838);">Planilha de Curva ABC de Clientes 4.0&nbsp;&nbsp;-&nbsp;&nbsp;Excel</span>
<span class="t" style="left:1129.71px;top:10.36px;font-size:12.75px;color:#217346;font-weight:normal;transform:scaleX(0.8941);-webkit-text-stroke:0.2px #217346;">Entrar</span>
<span class="t" style="left:7.00px;top:43.32px;font-size:13.0px;color:#444;font-weight:normal;transform:scaleX(1.0045);">Arquivo</span>
<span class="t" style="left:71.96px;top:43.32px;font-size:13.0px;color:#333;font-weight:normal;transform:scaleX(1.0395);-webkit-text-stroke:0.4px #333;">Página Inicial</span>
<span class="t" style="left:178.97px;top:43.32px;font-size:13.0px;color:#444;font-weight:normal;transform:scaleX(1.0286);">Inserir</span>
<span class="t" style="left:245.00px;top:43.32px;font-size:13.0px;color:#444;font-weight:normal;transform:scaleX(0.9950);">Layout da Página</span>
<span class="t" style="left:376.41px;top:43.32px;font-size:13.0px;color:#444;font-weight:normal;transform:scaleX(0.9925);">Fórmulas</span>
<span class="t" style="left:457.94px;top:43.32px;font-size:13.0px;color:#444;font-weight:normal;transform:scaleX(1.0556);">Dados</span>
<span class="t" style="left:523.03px;top:43.32px;font-size:13.0px;color:#444;font-weight:normal;transform:scaleX(0.9717);">Revisão</span>
<span class="t" style="left:596.01px;top:43.32px;font-size:13.0px;color:#444;font-weight:normal;transform:scaleX(0.9875);">Exibir</span>
<span class="t" style="left:656.99px;top:43.32px;font-size:13.0px;color:#444;font-weight:normal;transform:scaleX(1.0081);">Desenvolvedor</span>
<span class="t" style="left:775.00px;top:43.32px;font-size:13.0px;color:#444;font-weight:normal;transform:scaleX(0.9909);">Ajuda</span>
<span class="t" style="left:863.48px;top:43.32px;font-size:13.0px;color:#444;font-weight:normal;transform:scaleX(1.0158);">Diga-me o que você deseja fazer</span>
<span class="t" style="left:1144.93px;top:43.32px;font-size:13.0px;color:#217346;font-weight:normal;transform:scaleX(1.0685);-webkit-text-stroke:0.4px #217346;">Compartilhar</span>
<span class="t" style="left:1266.34px;top:43.32px;font-size:13.0px;color:#217346;font-weight:normal;transform:scaleX(1.0639);-webkit-text-stroke:0.4px #217346;">Comentários</span>
<span class="t" style="left:26.00px;top:106.74px;font-size:12.25px;color:#444;font-weight:normal;">Colar</span>
<span class="t" style="left:4.50px;top:147.16px;font-size:11.5px;color:#444;font-weight:normal;transform:scaleX(0.9489);">Área de Transfer...</span>
<span class="t" style="left:127.70px;top:81.94px;font-size:12.25px;color:#444;font-weight:normal;">Calibri</span>
<span class="t" style="left:239.08px;top:81.94px;font-size:12.25px;color:#444;font-weight:normal;transform:scaleX(0.9167);">12</span>
<span class="t" style="left:199.78px;top:147.16px;font-size:11.5px;color:#444;font-weight:normal;transform:scaleX(1.0250);">Fonte</span>
<span class="t" style="left:488.51px;top:81.94px;font-size:12.25px;color:#a6a6a6;font-weight:normal;transform:scaleX(0.9914);">Quebrar Texto Automaticamente</span>
<span class="t" style="left:488.56px;top:114.24px;font-size:12.25px;color:#a6a6a6;font-weight:normal;transform:scaleX(0.9435);">Mesclar e Centralizar</span>
<span class="t" style="left:461.80px;top:147.16px;font-size:11.5px;color:#444;font-weight:normal;transform:scaleX(1.0297);">Alinhamento</span>
<span class="t" style="left:720.39px;top:147.16px;font-size:11.5px;color:#444;font-weight:normal;transform:scaleX(1.0100);">Número</span>
<span class="t" style="left:838.02px;top:106.74px;font-size:12.25px;color:#a6a6a6;font-weight:normal;transform:scaleX(0.9797);">Formatação</span>
<span class="t" style="left:834.00px;top:123.24px;font-size:12.25px;color:#a6a6a6;font-weight:normal;">Condicional</span>
<span class="t" style="left:910.00px;top:106.74px;font-size:12.25px;color:#a6a6a6;font-weight:normal;">Formatar como</span>
<span class="t" style="left:932.50px;top:123.24px;font-size:12.25px;color:#a6a6a6;font-weight:normal;transform:scaleX(0.9028);">Tabela</span>
<span class="t" style="left:997.05px;top:106.74px;font-size:12.25px;color:#a6a6a6;font-weight:normal;transform:scaleX(0.9538);">Estilos de</span>
<span class="t" style="left:1001.04px;top:123.24px;font-size:12.25px;color:#a6a6a6;font-weight:normal;transform:scaleX(0.9647);">Célula</span>
<span class="t" style="left:923.60px;top:147.16px;font-size:11.5px;color:#444;font-weight:normal;transform:scaleX(1.0031);">Estilos</span>
<span class="t" style="left:1087.83px;top:73.08px;font-size:12.0px;color:#a6a6a6;font-weight:normal;transform:scaleX(0.9688);">Inserir</span>
<span class="t" style="left:1087.88px;top:95.64px;font-size:12.25px;color:#a6a6a6;font-weight:normal;transform:scaleX(0.9222);">Excluir</span>
<span class="t" style="left:1087.86px;top:118.60px;font-size:12.5px;color:#333;font-weight:normal;transform:scaleX(0.9440);">Formatar</span>
<span class="t" style="left:1088.01px;top:147.16px;font-size:11.5px;color:#444;font-weight:normal;transform:scaleX(0.9892);">Células</span>
<span class="t" style="left:1203.41px;top:106.92px;font-size:11.75px;color:#444;font-weight:normal;transform:scaleX(0.9925);">Classificar</span>
<span class="t" style="left:1207.60px;top:123.12px;font-size:11.75px;color:#444;font-weight:normal;transform:scaleX(0.9600);">e Filtrar</span>
<span class="t" style="left:1265.30px;top:106.92px;font-size:11.75px;color:#444;font-weight:normal;">Localizar e</span>
<span class="t" style="left:1261.31px;top:123.12px;font-size:11.75px;color:#444;font-weight:normal;transform:scaleX(0.9944);">Selecionar</span>
<span class="t" style="left:1228.01px;top:147.16px;font-size:11.5px;color:#444;font-weight:normal;transform:scaleX(0.9912);">Edição</span>
<span class="t" style="left:129.71px;top:111.78px;font-size:13.25px;color:#a0a0a0;font-weight:bold;transform:scaleX(1.1875);">N</span>
<span class="t" style="left:153.50px;top:111.46px;font-size:14.0px;color:#a0a0a0;font-weight:normal;font-style:italic;font-family:'Liberation Serif',serif;-webkit-text-stroke:0.3px #a0a0a0;">I</span>
<span class="t" style="left:175.14px;top:111.78px;font-size:13.25px;color:#a0a0a0;font-weight:normal;transform:scaleX(1.0571);">S</span>
<span class="t" style="left:292.60px;top:109.38px;font-size:15.75px;color:#a0a0a0;font-weight:normal;transform:scaleX(1.3727);">A</span>
<span class="t" style="left:285.30px;top:81.36px;font-size:11.5px;color:#a0a0a0;font-weight:normal;transform:scaleX(1.0125);">A</span>
<span class="t" style="left:307.30px;top:82.22px;font-size:10.5px;color:#a0a0a0;font-weight:normal;transform:scaleX(1.0429);">A</span>
<span class="t" style="left:721.89px;top:109.44px;font-size:19.75px;color:#9a9a9a;font-weight:normal;transform:scaleX(0.9062);">%</span>
<span class="t" style="left:743.80px;top:113.76px;font-size:10.25px;color:#ababab;font-weight:normal;transform:scaleX(0.9059);">000</span>
<span class="t" style="left:785.60px;top:110.54px;font-size:8.5px;color:#b0b0b0;font-weight:normal;transform:scaleX(0.8800);">0</span>
<span class="t" style="left:775.82px;top:118.40px;font-size:8.75px;color:#b0b0b0;font-weight:normal;transform:scaleX(1.1818);">,00</span>
<span class="t" style="left:797.27px;top:110.54px;font-size:8.5px;color:#b0b0b0;font-weight:normal;transform:scaleX(1.2273);">,00</span>
<span class="t" style="left:805.58px;top:118.40px;font-size:8.75px;color:#b0b0b0;font-weight:normal;transform:scaleX(0.9167);">,0</span>
<span class="t" style="left:1217.00px;top:71.02px;font-size:16.75px;color:#2b88d8;font-weight:normal;transform:scaleX(0.9091);">A</span>
<span class="t" style="left:1217.30px;top:84.72px;font-size:16.75px;color:#333;font-weight:normal;transform:scaleX(0.8700);">Z</span>
<span class="t" style="left:29.48px;top:165.20px;font-size:12.5px;color:#217346;font-weight:normal;transform:scaleX(0.8800);">A</span>
<span class="t" style="left:41.54px;top:165.20px;font-size:12.5px;color:#000;font-weight:normal;transform:scaleX(0.8800);">B</span>
<span class="t" style="left:72.04px;top:165.20px;font-size:12.5px;color:#000;font-weight:normal;transform:scaleX(0.8800);">C</span>
<span class="t" style="left:195.60px;top:165.20px;font-size:12.5px;color:#000;font-weight:normal;transform:scaleX(0.8800);">D</span>
<span class="t" style="left:355.04px;top:165.20px;font-size:12.5px;color:#000;font-weight:normal;transform:scaleX(0.8800);">E</span>
<span class="t" style="left:460.48px;top:165.20px;font-size:12.5px;color:#000;font-weight:normal;transform:scaleX(0.8800);">F</span>
<span class="t" style="left:552.10px;top:165.20px;font-size:12.5px;color:#000;font-weight:normal;transform:scaleX(0.8800);">G</span>
<span class="t" style="left:657.04px;top:165.20px;font-size:12.5px;color:#000;font-weight:normal;transform:scaleX(0.8800);">H</span>
<span class="t" style="left:754.00px;top:165.20px;font-size:12.5px;color:#000;font-weight:normal;">I</span>
<span class="t" style="left:830.00px;top:165.20px;font-size:12.5px;color:#000;font-weight:normal;">J</span>
<span class="t" style="left:906.04px;top:165.20px;font-size:12.5px;color:#000;font-weight:normal;transform:scaleX(0.8800);">K</span>
<span class="t" style="left:983.48px;top:165.20px;font-size:12.5px;color:#000;font-weight:normal;transform:scaleX(0.8800);">L</span>
<span class="t" style="left:1059.16px;top:165.20px;font-size:12.5px;color:#000;font-weight:normal;transform:scaleX(0.8800);">M</span>
<span class="t" style="left:1137.04px;top:165.20px;font-size:12.5px;color:#000;font-weight:normal;transform:scaleX(0.8800);">N</span>
<span class="t" style="left:1213.60px;top:165.20px;font-size:12.5px;color:#000;font-weight:normal;transform:scaleX(0.8800);">O</span>
<span class="t" style="left:1291.04px;top:165.20px;font-size:12.5px;color:#000;font-weight:normal;transform:scaleX(0.8800);">P</span>
<span class="t" style="left:8.80px;top:212.20px;font-size:12.5px;color:#217346;font-weight:normal;">1</span>
<span class="t" style="left:8.80px;top:248.20px;font-size:12.5px;color:#000;font-weight:normal;">2</span>
<span class="t" style="left:8.80px;top:266.20px;font-size:12.5px;color:#000;font-weight:normal;">3</span>
<span class="t" style="left:9.30px;top:302.20px;font-size:12.5px;color:#000;font-weight:normal;">4</span>
<span class="t" style="left:8.80px;top:338.20px;font-size:12.5px;color:#000;font-weight:normal;">5</span>
<span class="t" style="left:8.80px;top:374.20px;font-size:12.5px;color:#000;font-weight:normal;">6</span>
<span class="t" style="left:8.80px;top:410.20px;font-size:12.5px;color:#000;font-weight:normal;">7</span>
<span class="t" style="left:8.80px;top:446.20px;font-size:12.5px;color:#000;font-weight:normal;">8</span>
<span class="t" style="left:8.80px;top:482.20px;font-size:12.5px;color:#000;font-weight:normal;">9</span>
<span class="t" style="left:5.30px;top:518.20px;font-size:12.5px;color:#000;font-weight:normal;">10</span>
<span class="t" style="left:5.80px;top:554.20px;font-size:12.5px;color:#000;font-weight:normal;">11</span>
<span class="t" style="left:5.30px;top:590.20px;font-size:12.5px;color:#000;font-weight:normal;">12</span>
<span class="t" style="left:5.30px;top:626.20px;font-size:12.5px;color:#000;font-weight:normal;">13</span>
<span class="t" style="left:5.30px;top:662.20px;font-size:12.5px;color:#000;font-weight:normal;">14</span>
<span class="t" style="left:5.30px;top:698.20px;font-size:12.5px;color:#000;font-weight:normal;">15</span>
<span class="t" style="left:170.40px;top:190.20px;font-size:12.5px;color:#ffffff;font-weight:bold;transform:scaleX(0.8757);">CONFIGURAÇÃO</span>
<span class="t" style="left:204.00px;top:206.20px;font-size:12.5px;color:#ffffff;font-weight:bold;transform:scaleX(0.8519);">ABC</span>
<span class="t" style="left:296.60px;top:198.10px;font-size:12.5px;color:#ffffff;font-weight:bold;transform:scaleX(0.8129);">CLIENTES</span>
<span class="t" style="left:389.50px;top:190.20px;font-size:12.5px;color:#ffffff;font-weight:bold;transform:scaleX(0.8333);">CLASSIFICAÇÃO</span>
<span class="t" style="left:421.00px;top:206.20px;font-size:12.5px;color:#ffffff;font-weight:bold;transform:scaleX(0.8148);">ABC</span>
<span class="t" style="left:510.00px;top:198.10px;font-size:12.5px;color:#ffffff;font-weight:bold;transform:scaleX(0.8849);">CURVA ABC</span>
<span class="t" style="left:605.95px;top:198.10px;font-size:12.5px;color:#ffffff;font-weight:bold;transform:scaleX(0.8543);">INSTRUÇÕES</span>
<span class="t" style="left:221.62px;top:244.16px;font-size:12.75px;color:#404040;font-weight:bold;transform:scaleX(0.8845);">RANKING</span>
<span class="t" style="left:62.64px;top:293.56px;font-size:11.5px;color:#404040;font-weight:bold;transform:scaleX(1.1591);">Item</span>
<span class="t" style="left:115.00px;top:293.56px;font-size:11.5px;color:#404040;font-weight:bold;">Clientes</span>
<span class="t" style="left:312.00px;top:293.56px;font-size:11.5px;color:#404040;font-weight:bold;transform:scaleX(1.0133);">Valor vendido</span>
<span class="t" style="left:432.90px;top:293.56px;font-size:11.5px;color:#404040;font-weight:bold;transform:scaleX(1.0130);">% do total</span>
<span class="t" style="left:522.00px;top:293.56px;font-size:11.5px;color:#404040;font-weight:bold;transform:scaleX(0.9405);">% acumulada</span>
<span class="t" style="left:618.00px;top:293.56px;font-size:11.5px;color:#404040;font-weight:bold;transform:scaleX(0.8891);">Classificação ABC</span>
<span class="t" style="left:63.57px;top:330.16px;font-size:11.5px;color:#404040;font-weight:bold;transform:scaleX(1.0300);">1</span>
<span class="t" style="left:115.16px;top:330.16px;font-size:11.5px;color:#111111;font-weight:normal;transform:scaleX(1.0450);">Cliente 8</span>
<span class="t" style="left:311.75px;top:330.16px;font-size:11.5px;color:#111111;font-weight:normal;transform:scaleX(1.0450);">R$9.000,00</span>
<span class="t" style="left:432.75px;top:330.16px;font-size:11.5px;color:#111111;font-weight:normal;transform:scaleX(1.0450);">22,97%</span>
<span class="t" style="left:521.46px;top:330.16px;font-size:11.5px;color:#111111;font-weight:normal;transform:scaleX(1.0450);">22,97%</span>
<span class="t" style="left:656.38px;top:330.16px;font-size:11.5px;color:#ffffff;font-weight:normal;transform:scaleX(1.0300);">A</span>
<span class="t" style="left:64.60px;top:366.16px;font-size:11.5px;color:#404040;font-weight:bold;transform:scaleX(1.0300);">2</span>
<span class="t" style="left:115.16px;top:366.16px;font-size:11.5px;color:#111111;font-weight:normal;transform:scaleX(1.0450);">Cliente 1</span>
<span class="t" style="left:311.75px;top:366.16px;font-size:11.5px;color:#111111;font-weight:normal;transform:scaleX(1.0450);">R$8.000,00</span>
<span class="t" style="left:432.75px;top:366.16px;font-size:11.5px;color:#111111;font-weight:normal;transform:scaleX(1.0450);">20,41%</span>
<span class="t" style="left:522.50px;top:366.16px;font-size:11.5px;color:#111111;font-weight:normal;transform:scaleX(1.0450);">43,38%</span>
<span class="t" style="left:656.38px;top:366.16px;font-size:11.5px;color:#ffffff;font-weight:normal;transform:scaleX(1.0300);">A</span>
<span class="t" style="left:64.60px;top:402.16px;font-size:11.5px;color:#404040;font-weight:bold;transform:scaleX(1.0300);">3</span>
<span class="t" style="left:115.16px;top:402.16px;font-size:11.5px;color:#111111;font-weight:normal;transform:scaleX(1.0450);">Cliente 9</span>
<span class="t" style="left:311.75px;top:402.16px;font-size:11.5px;color:#111111;font-weight:normal;transform:scaleX(1.0450);">R$7.000,00</span>
<span class="t" style="left:432.75px;top:402.16px;font-size:11.5px;color:#111111;font-weight:normal;transform:scaleX(1.0450);">17,86%</span>
<span class="t" style="left:521.46px;top:402.16px;font-size:11.5px;color:#111111;font-weight:normal;transform:scaleX(1.0450);">61,24%</span>
<span class="t" style="left:656.38px;top:402.16px;font-size:11.5px;color:#ffffff;font-weight:normal;transform:scaleX(1.0300);">A</span>
<span class="t" style="left:64.60px;top:438.16px;font-size:11.5px;color:#404040;font-weight:bold;transform:scaleX(1.0300);">4</span>
<span class="t" style="left:115.16px;top:438.16px;font-size:11.5px;color:#111111;font-weight:normal;transform:scaleX(1.0450);">Cliente 3</span>
<span class="t" style="left:311.75px;top:438.16px;font-size:11.5px;color:#111111;font-weight:normal;transform:scaleX(1.0450);">R$3.200,00</span>
<span class="t" style="left:433.80px;top:438.16px;font-size:11.5px;color:#111111;font-weight:normal;transform:scaleX(1.0450);">8,17%</span>
<span class="t" style="left:521.46px;top:438.16px;font-size:11.5px;color:#111111;font-weight:normal;transform:scaleX(1.0450);">69,41%</span>
<span class="t" style="left:656.38px;top:438.16px;font-size:11.5px;color:#ffffff;font-weight:normal;transform:scaleX(1.0300);">A</span>
<span class="t" style="left:64.60px;top:474.16px;font-size:11.5px;color:#404040;font-weight:bold;transform:scaleX(1.0300);">5</span>
<span class="t" style="left:115.16px;top:474.16px;font-size:11.5px;color:#111111;font-weight:normal;transform:scaleX(1.0450);">Cliente 15</span>
<span class="t" style="left:311.75px;top:474.16px;font-size:11.5px;color:#111111;font-weight:normal;transform:scaleX(1.0450);">R$3.000,00</span>
<span class="t" style="left:432.75px;top:474.16px;font-size:11.5px;color:#111111;font-weight:normal;transform:scaleX(1.0450);">7,66%</span>
<span class="t" style="left:521.46px;top:474.16px;font-size:11.5px;color:#111111;font-weight:normal;transform:scaleX(1.0450);">77,06%</span>
<span class="t" style="left:656.38px;top:474.16px;font-size:11.5px;color:#ffffff;font-weight:normal;transform:scaleX(1.0300);">A</span>
<span class="t" style="left:64.60px;top:510.16px;font-size:11.5px;color:#404040;font-weight:bold;transform:scaleX(1.0300);">6</span>
<span class="t" style="left:115.16px;top:510.16px;font-size:11.5px;color:#111111;font-weight:normal;transform:scaleX(1.0450);">Cliente 2</span>
<span class="t" style="left:311.75px;top:510.16px;font-size:11.5px;color:#111111;font-weight:normal;transform:scaleX(1.0450);">R$3.000,00</span>
<span class="t" style="left:432.75px;top:510.16px;font-size:11.5px;color:#111111;font-weight:normal;transform:scaleX(1.0450);">7,66%</span>
<span class="t" style="left:522.50px;top:510.16px;font-size:11.5px;color:#111111;font-weight:normal;transform:scaleX(1.0450);">84,72%</span>
<span class="t" style="left:656.38px;top:510.16px;font-size:11.5px;color:#ffffff;font-weight:normal;transform:scaleX(1.0300);">B</span>
<span class="t" style="left:64.60px;top:546.16px;font-size:11.5px;color:#404040;font-weight:bold;transform:scaleX(1.0300);">7</span>
<span class="t" style="left:115.16px;top:546.16px;font-size:11.5px;color:#111111;font-weight:normal;transform:scaleX(1.0450);">Cliente 23</span>
<span class="t" style="left:311.75px;top:546.16px;font-size:11.5px;color:#111111;font-weight:normal;transform:scaleX(1.0450);">R$2.000,00</span>
<span class="t" style="left:432.75px;top:546.16px;font-size:11.5px;color:#111111;font-weight:normal;transform:scaleX(1.0450);">5,10%</span>
<span class="t" style="left:522.50px;top:546.16px;font-size:11.5px;color:#111111;font-weight:normal;transform:scaleX(1.0450);">89,82%</span>
<span class="t" style="left:656.38px;top:546.16px;font-size:11.5px;color:#ffffff;font-weight:normal;transform:scaleX(1.0300);">B</span>
<span class="t" style="left:64.60px;top:582.16px;font-size:11.5px;color:#404040;font-weight:bold;transform:scaleX(1.0300);">8</span>
<span class="t" style="left:115.16px;top:582.16px;font-size:11.5px;color:#111111;font-weight:normal;transform:scaleX(1.0450);">Cliente 6</span>
<span class="t" style="left:311.75px;top:582.16px;font-size:11.5px;color:#111111;font-weight:normal;transform:scaleX(1.0450);">R$1.500,00</span>
<span class="t" style="left:432.75px;top:582.16px;font-size:11.5px;color:#111111;font-weight:normal;transform:scaleX(1.0450);">3,83%</span>
<span class="t" style="left:521.46px;top:582.16px;font-size:11.5px;color:#111111;font-weight:normal;transform:scaleX(1.0450);">93,65%</span>
<span class="t" style="left:656.38px;top:582.16px;font-size:11.5px;color:#ffffff;font-weight:normal;transform:scaleX(1.0300);">B</span>
<span class="t" style="left:64.60px;top:618.16px;font-size:11.5px;color:#404040;font-weight:bold;transform:scaleX(1.0300);">9</span>
<span class="t" style="left:115.16px;top:618.16px;font-size:11.5px;color:#111111;font-weight:normal;transform:scaleX(1.0450);">Cliente 14</span>
<span class="t" style="left:311.75px;top:618.16px;font-size:11.5px;color:#111111;font-weight:normal;transform:scaleX(1.0450);">R$700,00</span>
<span class="t" style="left:432.75px;top:618.16px;font-size:11.5px;color:#111111;font-weight:normal;transform:scaleX(1.0450);">1,79%</span>
<span class="t" style="left:521.46px;top:618.16px;font-size:11.5px;color:#111111;font-weight:normal;transform:scaleX(1.0450);">95,43%</span>
<span class="t" style="left:655.87px;top:618.16px;font-size:11.5px;color:#ffffff;font-weight:normal;transform:scaleX(1.0300);">C</span>
<span class="t" style="left:63.57px;top:654.16px;font-size:11.5px;color:#404040;font-weight:bold;transform:scaleX(1.0300);">10</span>
<span class="t" style="left:115.16px;top:654.16px;font-size:11.5px;color:#111111;font-weight:normal;transform:scaleX(1.0450);">Cliente 7</span>
<span class="t" style="left:311.75px;top:654.16px;font-size:11.5px;color:#111111;font-weight:normal;transform:scaleX(1.0450);">R$200,00</span>
<span class="t" style="left:433.80px;top:654.16px;font-size:11.5px;color:#111111;font-weight:normal;transform:scaleX(1.0450);">0,51%</span>
<span class="t" style="left:521.46px;top:654.16px;font-size:11.5px;color:#111111;font-weight:normal;transform:scaleX(1.0450);">95,94%</span>
<span class="t" style="left:655.87px;top:654.16px;font-size:11.5px;color:#ffffff;font-weight:normal;transform:scaleX(1.0300);">C</span>
<span class="t" style="left:63.57px;top:690.16px;font-size:11.5px;color:#404040;font-weight:bold;transform:scaleX(1.0300);">11</span>
<span class="t" style="left:115.16px;top:690.16px;font-size:11.5px;color:#111111;font-weight:normal;transform:scaleX(1.0450);">Cliente 19</span>
<span class="t" style="left:311.75px;top:690.16px;font-size:11.5px;color:#111111;font-weight:normal;transform:scaleX(1.0450);">R$150,00</span>
<span class="t" style="left:433.80px;top:690.16px;font-size:11.5px;color:#111111;font-weight:normal;transform:scaleX(1.0450);">0,38%</span>
<span class="t" style="left:521.46px;top:690.16px;font-size:11.5px;color:#111111;font-weight:normal;transform:scaleX(1.0450);">96,33%</span>
<span class="t" style="left:655.87px;top:690.16px;font-size:11.5px;color:#ffffff;font-weight:normal;transform:scaleX(1.0300);">C</span>
<span class="t" style="left:110.95px;top:723.82px;font-size:13.0px;color:#404040;font-weight:normal;transform:scaleX(1.0455);">Con</span>
<span class="t" style="left:159.07px;top:723.82px;font-size:13.0px;color:#404040;font-weight:normal;transform:scaleX(0.9278);">Est</span>
<span class="t" style="left:202.50px;top:723.82px;font-size:13.0px;color:#217346;font-weight:bold;transform:scaleX(0.9074);">Clas</span>
<span class="t" style="left:250.02px;top:723.82px;font-size:13.0px;color:#404040;font-weight:normal;transform:scaleX(0.9800);">Cur</span>
<span class="t" style="left:295.96px;top:723.82px;font-size:13.0px;color:#404040;font-weight:normal;transform:scaleX(1.0400);">INI</span>
<span class="t" style="left:338.01px;top:723.82px;font-size:13.0px;color:#404040;font-weight:normal;transform:scaleX(0.9923);">DUV</span>
<span class="t" style="left:389.05px;top:723.82px;font-size:13.0px;color:#404040;font-weight:normal;transform:scaleX(0.9538);">SUG</span>
<span class="t" style="left:439.04px;top:723.82px;font-size:13.0px;color:#404040;font-weight:normal;transform:scaleX(0.9565);">LUZ</span>
<span class="t" style="left:1336.25px;top:749.72px;font-size:11.75px;color:#444;font-weight:normal;transform:scaleX(0.9455);">90%</span>
<span class="t" style="left:63.11px;top:195.32px;font-size:14.25px;color:#ffffff;font-weight:normal;transform:scaleX(0.8923);-webkit-text-stroke:0.35px #fff;">LUZ</span>
<span class="t" style="left:96.20px;top:196.56px;font-size:6.5px;color:#b4b4b4;font-weight:normal;transform:scaleX(0.8692);">Planilhas</span>
<span class="t" style="left:96.20px;top:202.56px;font-size:6.5px;color:#b4b4b4;font-weight:normal;transform:scaleX(0.8632);">Empresariais</span>
</body></html>
